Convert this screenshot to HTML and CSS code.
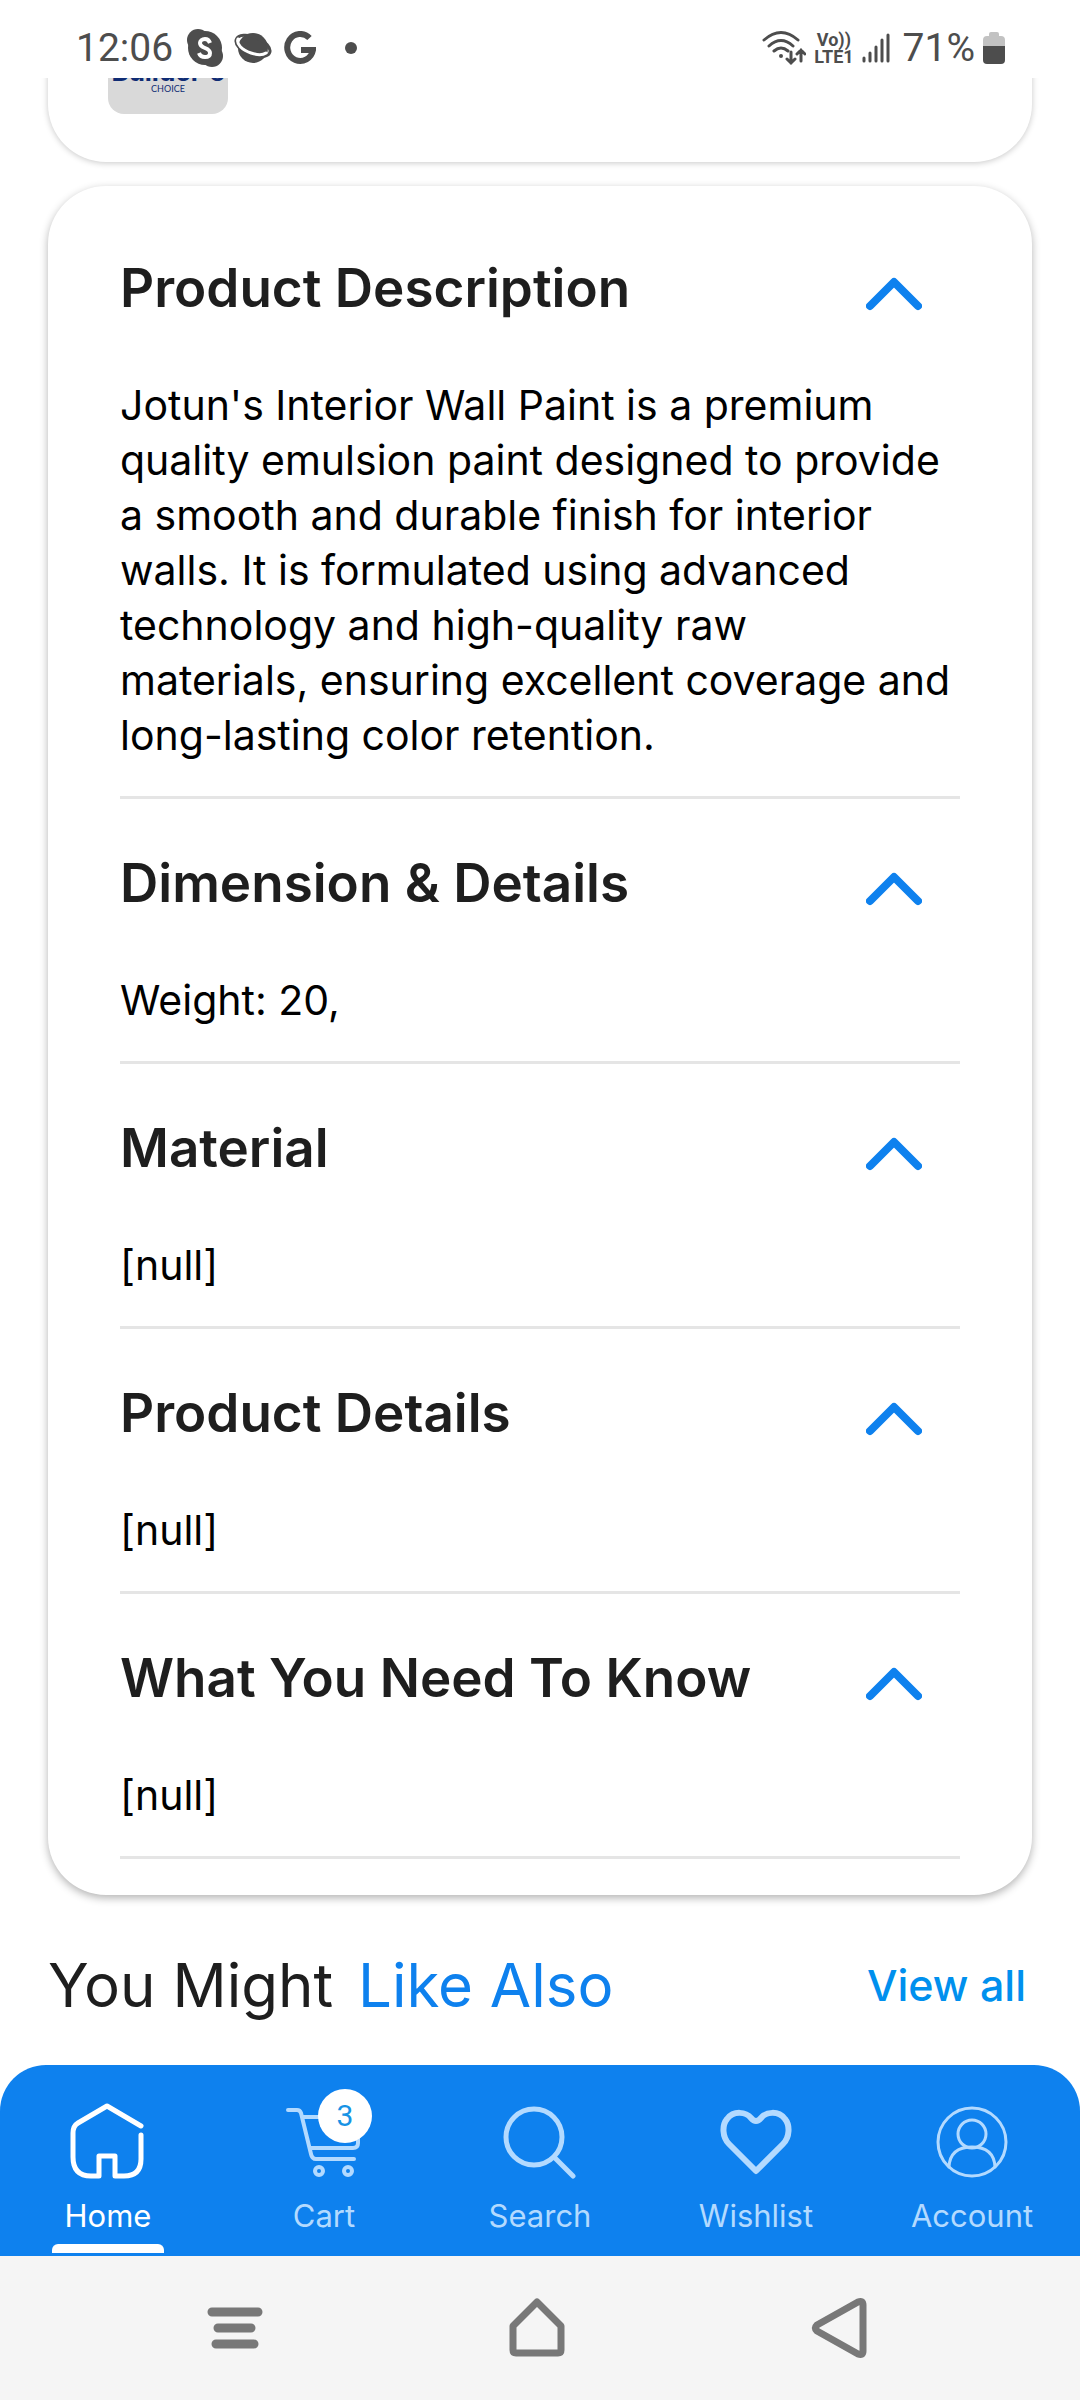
FILE: index.html
```html
<!DOCTYPE html>
<html lang="en">
<head>
  <meta charset="UTF-8">
  <meta name="viewport" content="width=device-width, initial-scale=1.0">
  <title>Product</title>
  <link rel="stylesheet" href="styles.css">
</head>
<body>
  <header class="status-bar">
    <div class="status-group">
      <span class="status-text">12:06</span>
      <svg class="skype" width="36" height="38" viewBox="0 0 36 38">
        <circle cx="18" cy="19" r="17" fill="#4d4d4d"/>
        <circle cx="11" cy="11" r="11" fill="#4d4d4d"/>
        <circle cx="25" cy="27" r="11" fill="#4d4d4d"/>
        <path d="M23 14c-1-3-3-4-5-4-3 0-5 2-5 4 0 6 10 4 10 10 0 3-2 4-5 4s-5-1-6-4" fill="none" stroke="#fff" stroke-width="4"/>
      </svg>
      <svg width="39" height="34" viewBox="0 0 39 34">
        <circle cx="19" cy="17" r="15" fill="#4d4d4d"/>
        <ellipse cx="19" cy="15" rx="18" ry="9" transform="rotate(22 19 15)" fill="none" stroke="#4d4d4d" stroke-width="3"/>
        <path d="M4 8c-2 5 4 11 13 14 6 2 12 2 15 0" fill="none" stroke="#fff" stroke-width="3" stroke-linecap="round"/>
      </svg>
      <svg width="32" height="34" viewBox="0 0 32 34">
        <path d="M25.500 7A13 13.500 0 1 0 29 19H17" fill="none" stroke="#4d4d4d" stroke-width="6"/>
      </svg>
      <span class="dot"></span>
    </div>
    <div class="status-group right">
      <svg width="44" height="36" viewBox="0 0 44 36" fill="none" stroke="#4d4d4d" stroke-width="3" stroke-linecap="round">
        <path d="M2 10Q19-5 36 10M7 16Q19 5 31 16M12 21Q19 15 26 21"/>
        <circle cx="19" cy="26" r="2" fill="#4d4d4d" stroke="none"/>
        <path d="M29 22v11M25 29l4 4 4-4M39 31V20M35 24l4-4 4 4"/>
      </svg>
      <span class="lte"><span>Vo))</span><span>LTE1</span></span>
      <svg width="28" height="32" viewBox="0 0 28 32" stroke="#4d4d4d" stroke-width="3" stroke-linecap="round">
        <path d="M2 26v3M8 21v8M14 15v14M20 8v21M26 3v26"/>
      </svg>
      <span class="status-text percent">71%</span>
      <svg class="battery" width="22" height="32" viewBox="0 0 22 32">
        <path d="M6 2q0-2 2-2h6q2 0 2 2v2h2q4 0 4 4v6H0V8q0-4 4-4h2z" fill="#c2c2c2"/>
        <path d="M0 14h22v14q0 4-4 4H4q-4 0-4-4z" fill="#4d4d4d"/>
      </svg>
    </div>
  </header>

  <main class="content">
    <section class="card brand-card">
      <div class="brand-logo">
        <span class="brand-name">Builder's</span>
        <span class="brand-sub">CHOICE</span>
      </div>
    </section>

    <section class="card details-card">
      <article class="item">
        <div class="item-head">
          <h2>Product Description</h2>
          <button class="toggle" aria-label="Collapse"><svg width="56" height="34" viewBox="0 0 56 34"><path d="M4 29L28 5l24 24"/></svg></button>
        </div>
        <p>Jotun's Interior Wall Paint is a premium<br>quality emulsion paint designed to provide<br>a smooth and durable finish for interior<br>walls. It is formulated using advanced<br>technology and high-quality raw<br>materials, ensuring excellent coverage and<br>long-lasting color retention.</p>
      </article>
      <article class="item">
        <div class="item-head">
          <h2>Dimension &amp; Details</h2>
          <button class="toggle" aria-label="Collapse"><svg width="56" height="34" viewBox="0 0 56 34"><path d="M4 29L28 5l24 24"/></svg></button>
        </div>
        <p>Weight: 20,</p>
      </article>
      <article class="item">
        <div class="item-head">
          <h2>Material</h2>
          <button class="toggle" aria-label="Collapse"><svg width="56" height="34" viewBox="0 0 56 34"><path d="M4 29L28 5l24 24"/></svg></button>
        </div>
        <p>[null]</p>
      </article>
      <article class="item">
        <div class="item-head">
          <h2>Product Details</h2>
          <button class="toggle" aria-label="Collapse"><svg width="56" height="34" viewBox="0 0 56 34"><path d="M4 29L28 5l24 24"/></svg></button>
        </div>
        <p>[null]</p>
      </article>
      <article class="item">
        <div class="item-head">
          <h2>What You Need To Know</h2>
          <button class="toggle" aria-label="Collapse"><svg width="56" height="34" viewBox="0 0 56 34"><path d="M4 29L28 5l24 24"/></svg></button>
        </div>
        <p>[null]</p>
      </article>
    </section>

    <div class="also">
      <h3>You Might <span>Like Also</span></h3>
      <a href="#">View all</a>
    </div>
  </main>

  <nav class="tabs">
    <a href="#" class="tab active">
      <svg width="76" height="76" viewBox="1 0 76 76" stroke-width="5">
        <path d="M72 23L38 3 9 20Q4 23 4 30V54Q4 73 22 73H30V53H46V73H55Q72 73 72 56V32"/>
      </svg>
      <span>Home</span>
    </a>
    <a href="#" class="tab">
      <svg width="76" height="76" viewBox="0 1 76 76" stroke-width="4">
        <path d="M2 8h9q3 0 4 3l10 41q1 5 5 5h38M16 15h56v26q0 5-5 5H25"/>
        <circle cx="33" cy="69" r="4"/>
        <circle cx="62" cy="69" r="4"/>
      </svg>
      <span>Cart</span>
      <b class="badge">3</b>
    </a>
    <a href="#" class="tab">
      <svg width="76" height="76" viewBox="2 0 76 76" stroke-width="5">
        <circle cx="34" cy="34" r="28"/>
        <path d="M54 54l19 19"/>
      </svg>
      <span>Search</span>
    </a>
    <a href="#" class="tab">
      <svg width="76" height="76" viewBox="0 0 76 76" stroke-width="6">
        <path d="M38 68L11 41C4 34 4 22 9 16 16 7 28 9 33 15q5 6 10 0C48 9 60 7 67 16c5 6 5 18-2 25z"/>
      </svg>
      <span>Wishlist</span>
    </a>
    <a href="#" class="tab">
      <svg width="76" height="76" viewBox="0 0 76 76" stroke-width="3">
        <circle cx="38" cy="39" r="34"/>
        <circle cx="38" cy="31" r="14"/>
        <path d="M15 64q1-20 23-20t23 20"/>
      </svg>
      <span>Account</span>
    </a>
  </nav>

  <footer class="system-bar">
    <button aria-label="Recents"><svg width="64" height="64" viewBox="0 0 64 64" stroke-width="9"><path d="M10 16h46M16 32h33M14 48h38"/></svg></button>
    <button aria-label="Home"><svg width="64" height="64" viewBox="0 0 64 64" stroke-width="7"><path d="M32 6L8 30v24q0 3 3 3h42q3 0 3-3V30z"/></svg></button>
    <button aria-label="Back"><svg width="64" height="64" viewBox="0 0 64 64" stroke-width="7"><path d="M50 6L9 29q-3 3 0 6l41 23q5 2 5-3V9q0-5-5-3z"/></svg></button>
  </footer>
</body>
</html>
```
FILE: styles.css
```css
* {
  box-sizing: border-box;
}
body {
  margin: 0;
  min-height: 100vh;
  display: flex;
  flex-direction: column;
  font-family: Inter, "Open Sans", sans-serif;
  background: white;
  color: #1e1e1e;
}
button {
  border: none;
  background: none;
  padding: 0;
  cursor: pointer;
}
a {
  text-decoration: none;
}
svg {
  display: block;
}

/* status bar */
.status-bar {
  position: sticky;
  top: 0;
  z-index: 2;
  height: 78px;
  padding: 18px 75px 0 76px;
  display: flex;
  justify-content: space-between;
  align-items: center;
  background: white;
  color: #4d4d4d;
}
.status-group {
  display: flex;
  align-items: center;
  gap: 11px;
}
.status-group.right {
  gap: 8px;
}
.status-text {
  font-family: Roboto, sans-serif;
  font-size: 39px;
  line-height: 44px;
}
.percent {
  margin-left: 5px;
}
.skype {
  margin-left: 3px;
}
.dot {
  width: 12px;
  height: 12px;
  margin-left: 18px;
  border-radius: 50%;
  background: #4d4d4d;
}
.lte {
  display: flex;
  flex-direction: column;
  align-items: center;
  font: bold 18px/17px Roboto, sans-serif;
}

/* cards */
.content {
  flex: 1;
}
.card {
  margin: 0 48px 24px;
  border-radius: 58px;
  background: white;
  box-shadow: 0 1px 6px rgba(0, 0, 0, 0.22);
}
.brand-card {
  margin-top: -132px;
  padding: 48px 60px;
}
.brand-logo {
  width: 120px;
  height: 120px;
  padding-bottom: 20px;
  display: flex;
  flex-direction: column;
  justify-content: flex-end;
  align-items: center;
  border-radius: 16px;
  background: #d9d9d9;
  color: #0f2c74;
}
.brand-name {
  font-size: 26px;
  line-height: 24px;
  font-weight: 700;
}
.brand-sub {
  font-family: Lato, sans-serif;
  font-size: 9px;
  line-height: 10px;
}
.details-card {
  padding: 18px 72px 36px;
  box-shadow: 0 3px 8px rgba(0, 0, 0, 0.3);
}
.item {
  padding: 52px 0 33px;
  border-bottom: 3px solid #e5e5e5;
}
.item-head {
  display: flex;
  justify-content: space-between;
  align-items: center;
  height: 64px;
  margin-bottom: 58px;
  padding-right: 38px;
}
.item h2 {
  margin: 0;
  font-size: 53px;
  line-height: 64px;
  font-weight: 600;
}
.item p {
  margin: 0;
  font-size: 41px;
  line-height: 55px;
  color: black;
  white-space: nowrap;
}
.toggle {
  padding-top: 12px;
}
.toggle path {
  fill: none;
  stroke: #0e81ee;
  stroke-width: 8;
  stroke-linecap: round;
  stroke-linejoin: round;
}
.also {
  display: flex;
  justify-content: space-between;
  align-items: center;
  padding: 21px 54px 0 48px;
}
.also h3 {
  margin: 0;
  font-size: 60px;
  line-height: 90px;
  font-weight: 400;
}
.also span {
  margin-left: 8px;
  color: #0e81ee;
}
.also a {
  font-size: 43px;
  font-weight: 500;
  color: #0090ee;
}

/* bottom navigation */
.tabs {
  display: flex;
  height: 191px;
  border-radius: 46px 46px 0 0;
  background: #0e81ee;
}
.tab {
  position: relative;
  flex: 1;
  display: flex;
  flex-direction: column;
  align-items: center;
  padding-top: 38px;
  font-size: 31px;
  line-height: 40px;
  color: #b3daff;
}
.tab svg {
  margin-bottom: 17px;
  fill: none;
  stroke: currentColor;
  stroke-linecap: round;
  stroke-linejoin: round;
}
.tab.active {
  color: white;
}
.tab.active::after {
  content: "";
  position: absolute;
  bottom: 3px;
  width: 112px;
  height: 9px;
  border-radius: 6px 6px 0 0;
  background: white;
}
.badge {
  position: absolute;
  top: 24px;
  left: 50%;
  width: 54px;
  height: 54px;
  margin-left: -6px;
  border-radius: 50%;
  background: white;
  color: #1793e5;
  font: 30px/54px Roboto, sans-serif;
  text-align: center;
}

/* system buttons */
.system-bar {
  height: 144px;
  padding: 0 208px 0 202px;
  display: flex;
  justify-content: space-between;
  align-items: center;
  background: #f5f5f5;
}
.system-bar svg {
  fill: none;
  stroke: #787878;
  stroke-linecap: round;
  stroke-linejoin: round;
}
```
